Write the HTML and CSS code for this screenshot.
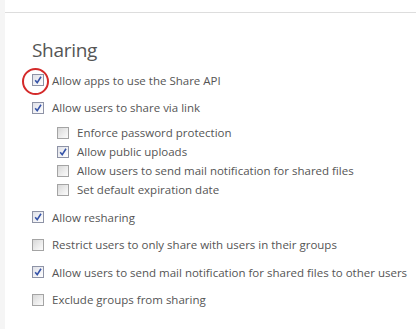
FILE: index.html
```html
<!DOCTYPE html>
<html>
<head>
<meta charset="utf-8">
<link rel="stylesheet" href="styles.css">
</head>
<body>
<div class="layout">
  <div class="sidebar"></div>
  <div class="main">
    <div class="section">
      <h2 class="title">Sharing</h2>
      <div class="row first">
        <span class="cb checked"><svg viewBox="0 0 12 12" width="12" height="12"><path d="M3.2 6.3 L5.2 8.7 L9 2.8" fill="none" stroke="#3553a8" stroke-width="1.6"/></svg></span>
        <span class="label">Allow apps to use the Share API</span>
        <span class="ring"></span>
      </div>
      <div class="row">
        <span class="cb checked"><svg viewBox="0 0 12 12" width="12" height="12"><path d="M3.2 6.3 L5.2 8.7 L9 2.8" fill="none" stroke="#3553a8" stroke-width="1.6"/></svg></span>
        <span class="label">Allow users to share via link</span>
      </div>
      <div class="sub">
        <div class="subrow"><span class="cb"></span><span class="label">Enforce password protection</span></div>
        <div class="subrow"><span class="cb checked"><svg viewBox="0 0 12 12" width="12" height="12"><path d="M3.2 6.3 L5.2 8.7 L9 2.8" fill="none" stroke="#3553a8" stroke-width="1.6"/></svg></span><span class="label">Allow public uploads</span></div>
        <div class="subrow"><span class="cb"></span><span class="label">Allow users to send mail notification for shared files</span></div>
        <div class="subrow"><span class="cb"></span><span class="label">Set default expiration date</span></div>
      </div>
      <div class="row">
        <span class="cb checked"><svg viewBox="0 0 12 12" width="12" height="12"><path d="M3.2 6.3 L5.2 8.7 L9 2.8" fill="none" stroke="#3553a8" stroke-width="1.6"/></svg></span>
        <span class="label">Allow resharing</span>
      </div>
      <div class="row">
        <span class="cb"></span>
        <span class="label">Restrict users to only share with users in their groups</span>
      </div>
      <div class="row">
        <span class="cb checked"><svg viewBox="0 0 12 12" width="12" height="12"><path d="M3.2 6.3 L5.2 8.7 L9 2.8" fill="none" stroke="#3553a8" stroke-width="1.6"/></svg></span>
        <span class="label">Allow users to send mail notification for shared files to other users</span>
      </div>
      <div class="row">
        <span class="cb"></span>
        <span class="label">Exclude groups from sharing</span>
      </div>
    </div>
  </div>
</div>
</body>
</html>
```

FILE: styles.css
```css
html, body {
  margin: 0;
  padding: 0;
  background: #fff;
}
body {
  font-family: "Open Sans", "DejaVu Sans", sans-serif;
  font-size: 11.5px;
  color: #555;
}
.layout {
  display: flex;
  height: 329px;
  overflow: hidden;
}
.sidebar {
  width: 5px;
  background: #f5f5f5;
  flex: none;
}
.main {
  flex: 1;
  padding-top: 12px;
}
.section {
  border-top: 1px solid #dddddd;
  padding: 23px 0 0 27px;
}
.title {
  margin: 0 0 7px 0;
  font-size: 19px;
  letter-spacing: -0.3px;
  font-weight: 400;
  line-height: 28px;
  color: #555;
}
.row {
  position: relative;
  display: flex;
  align-items: center;
  height: 18px;
  margin-bottom: 9.6px;
  white-space: nowrap;
}
.sub {
  margin: -3px 0 9px 25px;
}
.subrow {
  display: flex;
  align-items: center;
  height: 19px;
  white-space: nowrap;
}
.cb {
  box-sizing: border-box;
  width: 12px;
  height: 12px;
  border: 1px solid #a4a4a4;
  background: linear-gradient(135deg, #d8d8d8 0%, #f2f2f2 70%, #fbfbfb 100%);
  flex: none;
  display: flex;
  align-items: center;
  justify-content: center;
  margin-right: 8px;
}
.cb svg {
  display: block;
  margin: -1px;
}
.cb.checked {
  border-color: #8e93a6;
  background: linear-gradient(135deg, #dfe1e8 0%, #f6f6f8 70%, #fff 100%);
}
.ring {
  position: absolute;
  left: -10px;
  top: -3px;
  width: 23px;
  height: 23px;
  border: 2px solid #d42a2a;
  border-radius: 50%;
}
```
